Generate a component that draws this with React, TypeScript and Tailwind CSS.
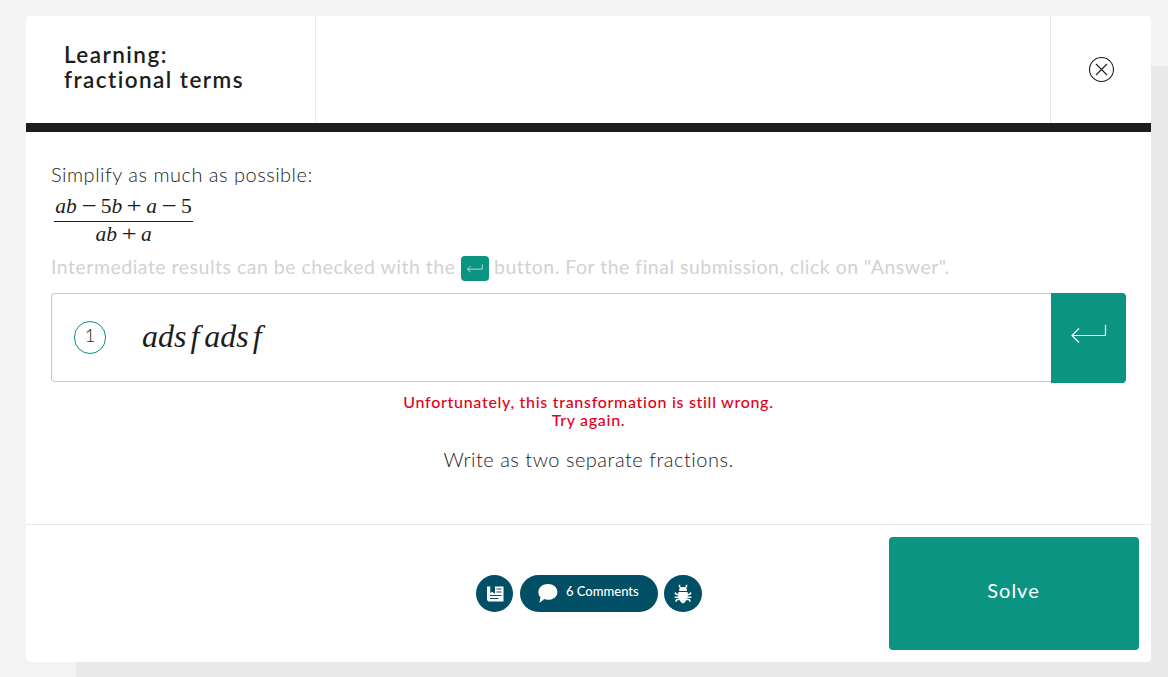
import type { ReactNode } from 'react';

const sans = "font-['Lato','Open_Sans',sans-serif]";
const serif = "font-['Liberation_Serif','Times_New_Roman',serif]";

function ReturnArrow({ className }: { className: string }) {
  return (
    <svg className={className} viewBox="0 0 36 20" fill="none" stroke="currentColor">
      <path d="M1 11.5H34.5V1" />
      <path d="M8 4.5L1 11.5L8 18.5" />
    </svg>
  );
}

function CloseIcon() {
  return (
    <svg className="size-[26px]" viewBox="0 0 26 26" fill="none" stroke="#1d1d1d" strokeWidth="1.1">
      <circle cx="13.5" cy="12.5" r="12" />
      <path d="M8 7L19 18M19 7L8 18" />
    </svg>
  );
}

function NotesIcon() {
  return (
    <svg className="ml-px h-[16px] w-[17px]" viewBox="0 0 17 16">
      <path fill="#fff" d="M0 .5H3.500V7L5.200 5.800L7 7V.5H16.500V15.500H1.500L0 14Z" />
      <path fill="#004f64" d="M3.500 .5H4V6.600L3.500 7ZM6.500 .5H8V7.500H7L6.500 6.600Z" />
      <path stroke="#004f64" strokeWidth="1" d="M9.500 3H14.500M9.500 6H14.500M3 9.500H14.500M3 12.500H11.500" />
    </svg>
  );
}

function BubbleIcon() {
  return (
    <svg className="h-[19px] w-[20px]" viewBox="0 0 20 19" fill="#fff">
      <path d="M10 0C15.3 0 19.4 3.4 19.4 7.9C19.4 12.400 15.300 15.800 10 15.800C8.600 15.800 7.200 15.600 6 15.100C4.700 16.800 3 18.200 1.200 18.600C1.900 17.200 2.300 14.900 2.300 12.900C1 11.500 .4 9.800 .4 7.900C.4 3.400 4.600 0 10 0Z" />
    </svg>
  );
}

function BugIcon() {
  return (
    <svg className="mr-px h-[20px] w-[18px]" viewBox="0 0 18 20" fill="none" stroke="#fff">
      <path fill="#fff" stroke="none" d="M5 7C5 4.500 6.300 3 9 3S13 4.500 13 7ZM4.400 8H13.600C14.400 13 12.800 17.600 9 19.500C5.200 17.600 3.600 13 4.400 8Z" />
      <path strokeWidth="1.400" d="M5.500 .8V2.500L7 4.500M12.500 .8V2.500L11 4.500" />
      <path strokeWidth="1.600" d="M5 10.800L2.300 10.200L.9 8.600M5 13.200H.6M5.300 15.200L2.600 15.700L1.800 17.600M13 10.800L15.700 10.200L17.100 8.600M13 13.200H17.400M12.700 15.200L15.400 15.700L16.200 17.600" />
    </svg>
  );
}

function Op({ children }: { children: ReactNode }) {
  return <span className="mx-[4px] inline-block w-[16px] scale-x-[1.250] text-center not-italic">{children}</span>;
}

function Num({ children }: { children: ReactNode }) {
  return <span className="not-italic">{children}</span>;
}

export default function App() {
  return (
    <div className={`h-[677px] w-[1168px] overflow-hidden bg-[#f3f3f3] pt-4 pl-[26px] text-[#1d1d1d] ${sans}`}>
      <main className="flex h-[646px] w-[1125px] flex-col rounded bg-white shadow-[50px_50px_0_#e9e9e9]">
        <header className="flex h-[116px] shrink-0 border-b-[9px] border-[#1d1d1d]">
          <h1 className="w-[290px] border-r border-[#e8e8e8] pt-[26px] pl-[38px] text-[22.500px] leading-[25px] font-semibold tracking-[1.450px]">
            Learning:
            <br />
            fractional terms
          </h1>
          <div className="flex-1" />
          <button className="flex w-[101px] items-center justify-center border-l border-[#e8e8e8]" aria-label="Close">
            <CloseIcon />
          </button>
        </header>

        <section className="flex h-[392px] shrink-0 flex-col px-[25px] pt-[30px]">
          <p className="h-[28px] text-[20px] leading-[24px] font-light tracking-[0.5px] whitespace-nowrap">
            Simplify as much as possible:
          </p>
          <div className={`ml-[3px] flex h-[58px] w-[139px] flex-col items-center text-[21.500px] italic whitespace-nowrap ${serif}`}>
            <div className="flex h-[32px] w-full items-center justify-center border-b border-[#1d1d1d] pt-[2px]">
              ab<Op>−</Op><Num>5</Num>b<Op>+</Op>a<Op>−</Op><Num>5</Num>
            </div>
            <div className="flex h-[26px] items-center pb-px">
              ab<Op>+</Op>a
            </div>
          </div>
          <p className="flex h-[45px] items-start pt-[7px] text-[19.500px] leading-[24px] tracking-[0.5px] whitespace-nowrap text-[#d2d2d2]">
            <span className="w-[410px]">Intermediate results can be checked with the</span>
            <span className="mt-px flex h-[25px] w-[28px] items-center justify-center rounded bg-[#0c9482] text-white/75">
              <ReturnArrow className="h-[9px] w-[16px] [stroke-width:2px]" />
            </span>
            <span className="ml-[5px]">button. For the final submission, click on "Answer".</span>
          </p>
          <div className="flex h-[90px] shrink-0">
            <div className="flex h-[89px] flex-1 items-center rounded-l border border-r-0 border-[#c9c9c9] pl-[22px]">
              <span className="flex h-[33px] w-[32px] items-center justify-center rounded-full border border-[#0c9482] pb-[4px] text-[18px] font-light">
                1
              </span>
              <span className={`mb-[4px] ml-[36px] text-[32px] leading-[36px] italic ${serif}`}>
                ads<span className="mr-[5px] ml-[4px]">f</span>ads<span className="ml-[4px]">f</span>
              </span>
            </div>
            <button className="flex w-[75px] items-center justify-center rounded-r bg-[#0c9482] pb-[8px] text-white" aria-label="Check">
              <ReturnArrow className="h-[20px] w-[36px] [stroke-width:1.200px]" />
            </button>
          </div>
          <p className="mt-[10px] text-center text-[16px] leading-[18px] font-medium tracking-[0.7px] text-[#e2001a]">
            Unfortunately, this transformation is still wrong.
            <br />
            Try again.
          </p>
          <p className="mt-[18px] text-center text-[20px] leading-[24px] font-light tracking-[0.5px]">
            Write as two separate fractions.
          </p>
        </section>

        <footer className="flex flex-1 border-t border-[#e8e8e8]">
          <div className="w-[450px]" />
          <div className="mt-[50px] flex h-[37px] items-center">
            <button className="flex size-[37px] items-center justify-center rounded-full bg-[#004f64]" aria-label="Notes">
              <NotesIcon />
            </button>
            <button className="ml-[7px] flex h-[37px] w-[138px] items-center rounded-full bg-[#004f64] pl-[18px] text-[13px] text-white" aria-label="Comments">
              <BubbleIcon />
              <span className="mb-[3px] ml-[8px] font-medium whitespace-nowrap">6 Comments</span>
            </button>
            <button className="ml-[6px] flex h-[37px] w-[38px] items-center justify-center rounded-full bg-[#004f64]" aria-label="Report a bug">
              <BugIcon />
            </button>
          </div>
          <button className="mt-[12px] mr-[12px] ml-auto h-[113px] w-[250px] rounded bg-[#0c9482] pr-[1px] pb-[7px] text-[20px] tracking-[1px] text-white">
            Solve
          </button>
        </footer>
      </main>
    </div>
  );
}
